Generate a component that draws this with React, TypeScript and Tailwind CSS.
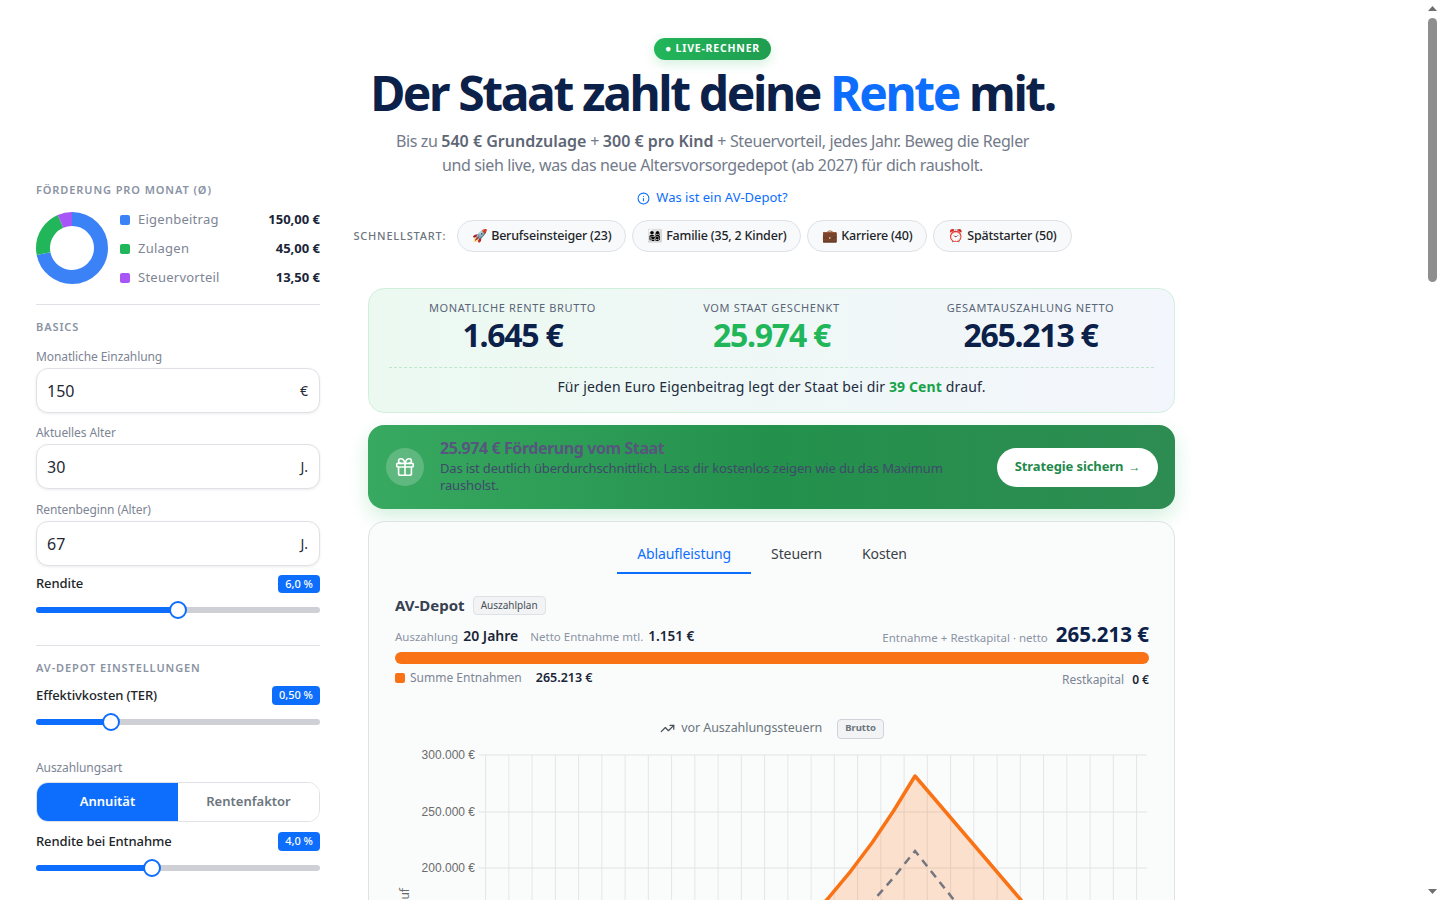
import React from 'react';
import { Gift, Info, TrendingUp } from 'lucide-react';

const font = "font-['Noto_Sans',sans-serif]";

const SectionTitle = ({ children }: { children: React.ReactNode }) => (
  <div className="text-[11px] leading-[14px] font-semibold tracking-[0.9px] uppercase text-[#8a93a3]">{children}</div>
);

const NumberField = ({ label, value, unit }: { label: string; value: string; unit: string }) => (
  <div>
    <div className="text-[12px] leading-[16px] tracking-[-0.1px] text-[#7d8594] mb-[3px]">{label}</div>
    <div className="h-[45px] rounded-[12px] border border-[#dee2e6] bg-white shadow-[0_1px_3px_rgba(0,0,0,0.08)] flex items-center justify-between pl-[10px] pr-[11px] text-[#1f2937]">
      <span className="text-[16px]">{value}</span>
      <span className="text-[14px]">{unit}</span>
    </div>
  </div>
);

const Slider = ({ label, value, percent, tall }: { label: string; value: string; percent: number; tall?: boolean }) => (
  <div>
    <div className={`flex items-center justify-between ${tall ? 'h-[19px]' : 'h-[18px]'}`}>
      <span className="text-[13px] font-medium tracking-[-0.1px] text-[#212529]">{label}</span>
      <span className="bg-[#0d6efd] text-white text-[11px] font-medium px-[7px] h-full flex items-center rounded-[4px]">{value}</span>
    </div>
    <div className="relative h-[6px] rounded-full bg-[#ced0d6] mt-[14px]">
      <div className="h-full rounded-full bg-[#0d6efd]" style={{ width: `${percent}%` }} />
      <div
        className="absolute top-1/2 -translate-x-1/2 -translate-y-1/2 w-[18px] h-[18px] rounded-full bg-white border-2 border-[#0d6efd]"
        style={{ left: `${percent}%` }}
      />
    </div>
  </div>
);

const Donut = () => (
  <svg width="72" height="72" viewBox="0 0 72 72" className="shrink-0">
    <g transform="rotate(-90 36 36)" fill="none" strokeWidth="14">
      <circle cx="36" cy="36" r="29" stroke="#3b82f6" pathLength="100" strokeDasharray="71.9 28.1" />
      <circle cx="36" cy="36" r="29" stroke="#22b65a" pathLength="100" strokeDasharray="21.6 78.4" strokeDashoffset="-71.9" />
      <circle cx="36" cy="36" r="29" stroke="#a855f7" pathLength="100" strokeDasharray="6.5 93.5" strokeDashoffset="-93.5" />
    </g>
  </svg>
);

const legend = [
  { name: 'Eigenbeitrag', value: '150,00 €', color: 'bg-[#3b82f6]' },
  { name: 'Zulagen', value: '45,00 €', color: 'bg-[#22b65a]' },
  { name: 'Steuervorteil', value: '13,50 €', color: 'bg-[#a855f7]' },
];

const Sidebar = () => (
  <aside className="col-start-1 row-start-1 row-span-2 pl-[36px] pt-[183px]">
    <SectionTitle>Förderung pro Monat (Ø)</SectionTitle>
    <div className="flex items-center h-[72px] gap-[12px] mt-[15px]">
      <Donut />
      <div className="flex-1 flex flex-col gap-[11px] pt-[1px]">
        {legend.map((row) => (
          <div key={row.name} className="flex items-center h-[18px]">
            <span className={`w-[10px] h-[10px] rounded-[2px] mr-[8px] ${row.color}`} />
            <span className="text-[13px] tracking-[0.25px] text-[#7d8594]">{row.name}</span>
            <span className="ml-auto text-[13px] font-bold text-[#1b2538]">{row.value}</span>
          </div>
        ))}
      </div>
    </div>
    <div className="border-t border-[#dee2e6] mt-[20px] pt-[15px]">
      <SectionTitle>Basics</SectionTitle>
    </div>
    <div className="flex flex-col gap-[12px] mt-[15px]">
      <NumberField label="Monatliche Einzahlung" value="150" unit="€" />
      <NumberField label="Aktuelles Alter" value="30" unit="J." />
      <div className="mt-[1px]">
        <NumberField label="Rentenbeginn (Alter)" value="67" unit="J." />
      </div>
    </div>
    <div className="mt-[9px]">
      <Slider label="Rendite" value="6,0 %" percent={50} />
    </div>
    <div className="border-t border-[#dee2e6] mt-[32px] pt-[15px]">
      <SectionTitle>AV-Depot Einstellungen</SectionTitle>
    </div>
    <div className="mt-[11px]">
      <Slider label="Effektivkosten (TER)" value="0,50 %" percent={26.5} tall />
    </div>
    <div className="text-[12px] leading-[16px] tracking-[-0.1px] text-[#7d8594] mt-[35px] mb-[6px]">Auszahlungsart</div>
    <div className="flex h-[40px] rounded-[12px] border border-[#dee2e6] overflow-hidden text-[13px] font-semibold">
      <div className="w-1/2 bg-[#0d6efd] text-white flex items-center justify-center">Annuität</div>
      <div className="w-1/2 bg-white text-[#6c757d] flex items-center justify-center">Rentenfaktor</div>
    </div>
    <div className="mt-[10px]">
      <Slider label="Rendite bei Entnahme" value="4,0 %" percent={41} tall />
    </div>
  </aside>
);

const presets = ['🚀 Berufseinsteiger (23)', '👨‍👩‍👧‍👦 Familie (35, 2 Kinder)', '💼 Karriere (40)', '⏰ Spätstarter (50)'];

const Hero = () => (
  <header className="col-span-full row-start-1 flex flex-col items-center pt-[38px] text-center">
    <div className="h-[22px] px-[11px] flex items-center rounded-full bg-gradient-to-r from-[#22b65a] to-[#1f9d50] text-white text-[10.5px] font-bold tracking-[0.8px] shadow-[0_4px_12px_rgba(34,182,90,0.2)]">
      ● LIVE-RECHNER
    </div>
    <h1 className="text-[48px] leading-[56px] font-bold text-[#0b2149] tracking-[-2.4px] mt-[5px]">
      Der Staat zahlt deine <span className="text-[#0d6efd]">Rente</span> mit.
    </h1>
    <p className="text-[16px] leading-[24px] tracking-[-0.37px] text-[#737b8a] mt-[8px]">
      Bis zu <strong className="font-semibold tracking-normal text-[#5d6675]">540 € Grundzulage</strong> +{' '}
      <strong className="font-semibold tracking-normal text-[#5d6675]">300 € pro Kind</strong> + Steuervorteil, jedes Jahr. Beweg die Regler
      <br />
      und sieh live, was das neue Altersvorsorgedepot (ab 2027) für dich rausholt.
    </p>
    <div className="flex items-center gap-[6px] text-[13px] text-[#0d6efd] mt-[12px] h-[18px]">
      <Info size={13} />
      Was ist ein AV-Depot?
    </div>
    <div className="flex items-center mt-[13px]">
      <span className="text-[11px] tracking-[0.8px] font-medium text-[#6c757d] mr-[11px]">SCHNELLSTART:</span>
      <div className="flex gap-[6px]">
        {presets.map((p) => (
          <span key={p} className="h-[32px] px-[14px] flex items-center rounded-full border border-[#dee2e6] bg-[#f8f9fa] text-[12.5px] font-medium tracking-[-0.2px] text-[#212529] whitespace-nowrap">
            {p}
          </span>
        ))}
      </div>
    </div>
  </header>
);

const stats = [
  { label: 'MONATLICHE RENTE BRUTTO', value: '1.645 €', color: 'text-[#0b2149]' },
  { label: 'VOM STAAT GESCHENKT', value: '25.974 €', color: 'text-[#22b65a]' },
  { label: 'GESAMTAUSZAHLUNG NETTO', value: '265.213 €', color: 'text-[#0b2149]' },
];

const Summary = () => (
  <section className="h-[125px] rounded-[16px] border border-[#d1f0dc] bg-gradient-to-r from-[#ecf9f1] to-[#f3f6fc] px-[20px]">
    <div className="grid grid-cols-3 gap-[12px] text-center pt-[11px]">
      {stats.map((s) => (
        <div key={s.label}>
          <div className="text-[11px] tracking-[0.65px] text-[#5a6577]">{s.label}</div>
          <div className={`text-[32px] leading-[36px] font-bold tracking-[-1.25px] ${s.color}`}>{s.value}</div>
        </div>
      ))}
    </div>
    <div className="border-t border-dashed border-[#bfe6cd] mt-[14px] pt-[8px] text-center text-[14px] tracking-[0.14px] text-[#212b3d]">
      Für jeden Euro Eigenbeitrag legt der Staat bei dir <strong className="font-bold text-[#16a34a]">39 Cent</strong> drauf.
    </div>
  </section>
);

const Banner = () => (
  <section className="mt-[12px] h-[84px] rounded-[16px] bg-gradient-to-r from-[#38a961] via-[#23914c] to-[#2d8c52] shadow-[0_8px_20px_rgba(34,182,90,0.2)] flex items-center pl-[18px] pr-[17px]">
    <div className="w-[38px] h-[38px] rounded-full bg-white/20 flex items-center justify-center text-white shrink-0">
      <Gift size={22} strokeWidth={1.75} />
    </div>
    <div className="ml-[16px] flex-1 min-w-0 -mt-[2px]">
      <div className="text-[16px] leading-[20px] font-bold tracking-[-0.42px] text-[#56567e]">25.974 € Förderung vom Staat</div>
      <div className="text-[13px] leading-[17px] tracking-[-0.15px] text-[#3f4a6b] max-w-[520px] mt-[2px]">
        Das ist deutlich überdurchschnittlich. Lass dir kostenlos zeigen wie du das Maximum rausholst.
      </div>
    </div>
    <div className="h-[39px] w-[161px] rounded-full bg-white flex items-center justify-center gap-[5px] text-[13px] font-bold tracking-[-0.1px] text-[#1f8a4c] shrink-0">
      Strategie sichern <span className="text-[12px] font-normal">→</span>
    </div>
  </section>
);

const gridX = Array.from({ length: 29 }, (_, i) => 90.6 + i * 23.25);
const gridY = [10, 67, 123, 180, 236, 293, 349];
const yLabels = ['300.000 €', '250.000 €', '200.000 €', '150.000 €', '100.000 €', '50.000 €', '0 €'];

// Wachstumskurve bis Rentenbeginn, danach Entnahme
const curve = (peak: number, tail: number[][]) => {
  const pts: number[][] = [];
  for (let t = 0; t <= 1.001; t += 0.05) {
    const h = peak * ((Math.exp(2 * t) - 1) / (Math.exp(2) - 1));
    pts.push([90.6 + t * 429.4, 349 - h]);
  }
  return [...pts, ...tail].map((p) => `${p[0].toFixed(1)},${p[1].toFixed(1)}`).join(' ');
};

const orangeLine = curve(318, [[626, 155], [680, 222], [741, 349]]);
const grayLine = curve(243, [[559, 155], [640, 260], [741, 349]]);

const Chart = () => (
  <svg width="770" height="380" viewBox="0 0 770 380" className="block mt-[6px]">
    {gridX.map((x) => (
      <line key={x} x1={x} x2={x} y1="10" y2="355" stroke="#e5e5e5" />
    ))}
    {gridY.map((y, i) => (
      <g key={y}>
        <line x1="84" x2="752" y1={y} y2={y} stroke="#e2e2e2" />
        <text x="80" y={y + 4} textAnchor="end" fontFamily="Liberation Sans, sans-serif" fontSize="12" fill="#6b6b6b">
          {yLabels[i]}
        </text>
      </g>
    ))}
    <text transform="translate(14 143) rotate(-90)" textAnchor="end" fontFamily="Noto Sans, sans-serif" fontSize="12" fill="#6b6b6b">
      Kapitalverlauf
    </text>
    <polygon points={`${orangeLine} 90.6,349`} fill="rgba(249,115,22,0.2)" />
    <polyline points={grayLine} fill="none" stroke="#75757f" strokeWidth="2.5" strokeDasharray="8 6" />
    <polyline points={orangeLine} fill="none" stroke="#f97316" strokeWidth="3.5" strokeLinejoin="round" />
  </svg>
);

const ResultCard = () => (
  <section className="mt-[12px] rounded-[16px] border border-[#dee2e6] bg-[#fafcfc] pl-[26px] pr-[25px] pb-[60px] min-h-[600px]">
    <div className="flex justify-center text-[14px] text-[#3d3f47] pt-[21px] tracking-[-0.1px]">
      <span className="px-[20px] h-[31px] text-[#0d6efd] border-b-2 border-[#0d6efd]">Ablaufleistung</span>
      <span className="px-[20px]">Steuern</span>
      <span className="px-[20px]">Kosten</span>
    </div>
    <div className="flex items-center gap-[8px] mt-[20px]">
      <span className="text-[15px] font-bold text-[#374151]">AV-Depot</span>
      <span className="h-[19px] px-[7px] flex items-center rounded-[4px] border border-[#dee2e6] bg-[#f1f3f5] text-[10px] text-[#495057]">Auszahlplan</span>
    </div>
    <div className="flex items-end justify-between mt-[6px] h-[24px] text-[#8a93a3] text-[11.5px]">
      <div className="flex items-baseline">
        <span>Auszahlung</span>
        <span className="ml-[5px] text-[14px] font-semibold text-[#1b2538]">20 Jahre</span>
        <span className="ml-[12px]">Netto Entnahme mtl.</span>
        <span className="ml-[5px] text-[13.5px] font-semibold text-[#1b2538]">1.151 €</span>
      </div>
      <div className="flex items-baseline">
        <span>Entnahme + Restkapital · netto</span>
        <span className="ml-[8px] text-[20.5px] leading-[24px] font-bold text-[#0b2149]">265.213 €</span>
      </div>
    </div>
    <div className="h-[12px] rounded-full bg-[#f97316] mt-[5px]" />
    <div className="flex justify-between mt-[4px] text-[12px] text-[#7d8594]">
      <div className="flex items-center">
        <span className="w-[10px] h-[10px] rounded-[2px] bg-[#f97316] mr-[5px]" />
        <span>Summe Entnahmen</span>
        <span className="ml-[14px] text-[12.5px] font-semibold text-[#1b2538]">265.213 €</span>
      </div>
      <div className="mt-[3px]">
        Restkapital <span className="ml-[5px] font-semibold text-[#1b2538]">0 €</span>
      </div>
    </div>
    <div className="flex items-center justify-center text-[12.5px] tracking-[-0.05px] text-[#6c757d] mt-[30px]">
      <TrendingUp size={15} className="mr-[6px] text-[#495057]" />
      vor Auszahlungssteuern
      <span className="ml-[15px] h-[20px] px-[7px] flex items-center rounded-[4px] border border-[#ced4da] bg-[#f1f3f5] text-[9.5px] font-bold text-[#6c757d]">Brutto</span>
    </div>
    <Chart />
  </section>
);

// Scrollleiste des Browsers liegt über der Seite
const ScrollIndicator = () => (
  <div className="fixed top-0 right-0 w-[15px] h-[900px] bg-white">
    <svg width="15" height="900" viewBox="0 0 15 900" className="block">
      <polygon points="7.5,6 12,11 3,11" fill="#6f6f6f" />
      <rect x="3" y="18" width="9" height="264" rx="4.5" fill="#8e8e8e" />
      <polygon points="3,889 12,889 7.5,894" fill="#6f6f6f" />
    </svg>
  </div>
);

export default function App() {
  return (
    <div className={`${font} bg-white w-[1425px] min-h-[2945px] grid grid-cols-[320px_48px_807px_1fr] grid-rows-[288px_auto]`}>
      <Hero />
      <Sidebar />
      <main className="col-start-3 row-start-2">
        <Summary />
        <Banner />
        <ResultCard />
      </main>
      <ScrollIndicator />
    </div>
  );
}
